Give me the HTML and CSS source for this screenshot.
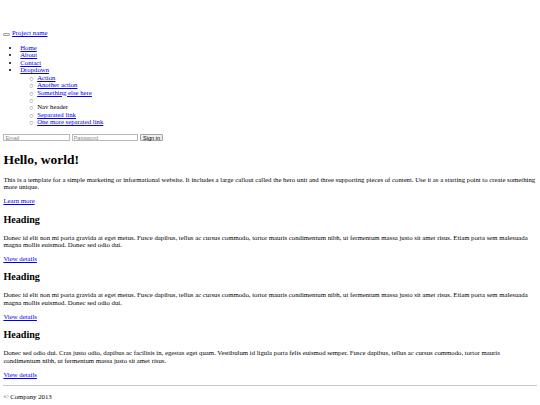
FILE: index.html
```html
<!DOCTYPE html>
<html lang="en">
<head>
<meta charset="utf-8">
<title>Jumbotron Template</title>
<link rel="stylesheet" href="styles.css">
</head>
<body class="page">
<div class="navbar">
  <div class="navbar-header">
    <button type="button" class="navbar-toggle"><span class="icon-bar"></span><span class="icon-bar"></span><span class="icon-bar"></span></button>
    <a class="link" href="#">Project name</a>
  </div>
  <div class="navbar-collapse">
    <ul class="nav">
      <li><a class="link" href="#">Home</a></li>
      <li><a class="link" href="#about">About</a></li>
      <li><a class="link" href="#contact">Contact</a></li>
      <li><a class="link" href="#">Dropdown</a>
        <ul class="dropdown-menu">
          <li><a class="link" href="#">Action</a></li>
          <li><a class="link" href="#">Another action</a></li>
          <li><a class="link" href="#">Something else here</a></li>
          <li class="divider"></li>
          <li class="dropdown-header">Nav header</li>
          <li><a class="link" href="#">Separated link</a></li>
          <li><a class="link" href="#">One more separated link</a></li>
        </ul>
      </li>
    </ul>
    <form class="navbar-form">
      <input class="field" type="text" placeholder="Email">
      <input class="field" type="password" placeholder="Password">
      <button type="submit" class="btn-signin">Sign in</button>
    </form>
  </div>
</div>

<div class="jumbotron">
  <h1 class="hero-title">Hello, world!</h1>
  <p class="text">This is a template for a simple marketing or informational website. It includes a large callout called the hero unit and three supporting pieces of content. Use it as a starting point to create something more unique.</p>
  <p class="text"><a class="link" href="#">Learn more</a></p>
</div>

<div class="container">
  <div class="col">
    <h2 class="heading">Heading</h2>
    <p class="text">Donec id elit non mi porta gravida at eget metus. Fusce dapibus, tellus ac cursus commodo, tortor mauris condimentum nibh, ut fermentum massa justo sit amet risus. Etiam porta sem malesuada magna mollis euismod. Donec sed odio dui.</p>
    <p class="text"><a class="link" href="#">View details</a></p>
  </div>
  <div class="col">
    <h2 class="heading">Heading</h2>
    <p class="text">Donec id elit non mi porta gravida at eget metus. Fusce dapibus, tellus ac cursus commodo, tortor mauris condimentum nibh, ut fermentum massa justo sit amet risus. Etiam porta sem malesuada magna mollis euismod. Donec sed odio dui.</p>
    <p class="text"><a class="link" href="#">View details</a></p>
  </div>
  <div class="col">
    <h2 class="heading">Heading</h2>
    <p class="text">Donec sed odio dui. Cras justo odio, dapibus ac facilisis in, egestas eget quam. Vestibulum id ligula porta felis euismod semper. Fusce dapibus, tellus ac cursus commodo, tortor mauris condimentum nibh, ut fermentum massa justo sit amet risus.</p>
    <p class="text"><a class="link" href="#">View details</a></p>
  </div>

  <hr class="rule">

  <footer class="footer">
    <p class="text">&copy; Company 2013</p>
  </footer>
</div>
</body>
</html>
```

FILE: styles.css
```css
html {
  font-size: 6.75px;
  background: #fff;
}

.page {
  margin: 3.375px;
  padding: 26px 0 8.4px;
  font-family: "Liberation Serif", "Times New Roman", serif;
  font-size: 6.75px;
  line-height: 1.11;
  color: #000;
  background: #fff;
}

.link {
  color: #0000ee;
  text-decoration: underline;
}

.navbar-toggle {
  display: inline-block;
  box-sizing: border-box;
  width: 7px;
  height: 3px;
  margin: 0;
  padding: 0;
  border: 1px solid #a3a3a3;
  border-radius: 1px;
  background: #efefef;
  vertical-align: baseline;
}

.nav {
  margin: 6.75px 0;
  padding-left: 16.875px;
  list-style: disc;
}

.dropdown-menu {
  margin: 0;
  padding-left: 16.875px;
  list-style: circle;
}

.dropdown-menu > li::marker {
  content: "\25CB\00a0\00a0\00a0";
  font-family: "DejaVu Sans", sans-serif;
  font-size: 4.2px;
  color: #222;
}

.navbar-form {
  margin: 0;
  padding: 1px 0;
}

.field {
  box-sizing: border-box;
  width: 66.5px;
  height: 7.8px;
  margin: 0;
  padding: 0 1px;
  border: 1px solid #b8b8b8;
  background: #fff;
  font: 5.6px "Liberation Sans", Arial, sans-serif;
  vertical-align: bottom;
}

.field::placeholder {
  color: #8a8a8a;
}

.btn-signin {
  box-sizing: border-box;
  width: 23.5px;
  height: 7.8px;
  margin: 0;
  padding: 0;
  border: 1px solid #a3a3a3;
  border-radius: 1px;
  background: #efefef;
  color: #000;
  font: 5.6px "Liberation Sans", Arial, sans-serif;
  vertical-align: bottom;
}

.hero-title {
  margin: 9.05px 0;
  font-size: 13.5px;
  font-weight: bold;
}

.text {
  margin: 6.75px 0;
}

.heading {
  margin: 8.75px 0;
  font-size: 10.125px;
  font-weight: bold;
}

.rule {
  height: 0;
  margin: 3.4px 0;
  border: 0;
  border-top: 1px solid #c6c6c6;
}
```
